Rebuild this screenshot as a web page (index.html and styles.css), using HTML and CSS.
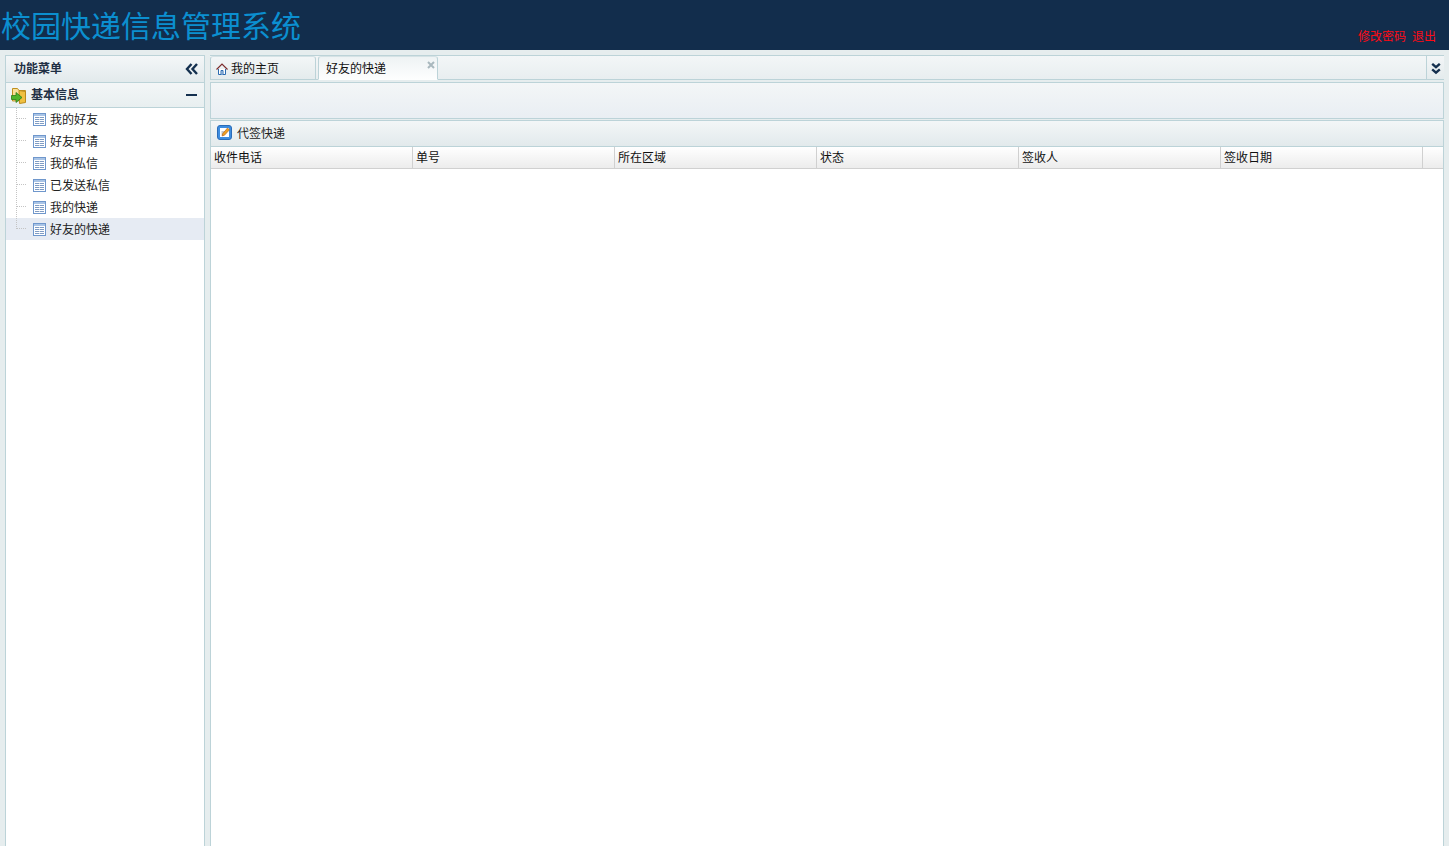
FILE: index.html
```html
<!DOCTYPE html>
<html lang="zh-CN">
<head>
<meta charset="utf-8">
<title>校园快递信息管理系统</title>
<link rel="stylesheet" href="styles.css">
</head>
<body>
<header class="top">
  <h1 class="brand">校园快递信息管理系统</h1>
  <div class="user-links"><a>修改密码</a><a>退出</a></div>
</header>
<div class="main">
  <aside class="west">
    <div class="west-title">
      <span>功能菜单</span>
      <svg class="ico-collapse" viewBox="0 0 14 12"><path d="M6.500 1 2 6l4.500 5M12 1 7.500 6l4.500 5" fill="none" stroke="#14304f" stroke-width="2.400"/></svg>
    </div>
    <div class="acc-head">
      <svg class="ico-folder" viewBox="0 0 16 17">
        <path d="M1.500 1.500h5l1.500 2h6.500v10l-13 .5z" fill="#f8e09a" stroke="#c08f1e"/>
        <path d="M8 3.500l6.500 1v11l-6 1z" fill="#f0c040" stroke="#b98a1c"/>
        <path d="M.5 8.500h4.500V5.500l6 5-6 5V12.500H.5z" fill="#4fb52c" stroke="#2c7c16" stroke-width=".8"/>
      </svg>
      <span class="acc-title">基本信息</span>
      <span class="acc-minus"></span>
    </div>
    <ul class="tree">
      <li class="node"><span class="guide"></span><svg class="ico-grid" viewBox="0 0 13 13"><use href="#g"/></svg><span>我的好友</span></li>
      <li class="node"><span class="guide"></span><svg class="ico-grid" viewBox="0 0 13 13"><use href="#g"/></svg><span>好友申请</span></li>
      <li class="node"><span class="guide"></span><svg class="ico-grid" viewBox="0 0 13 13"><use href="#g"/></svg><span>我的私信</span></li>
      <li class="node"><span class="guide"></span><svg class="ico-grid" viewBox="0 0 13 13"><use href="#g"/></svg><span>已发送私信</span></li>
      <li class="node"><span class="guide"></span><svg class="ico-grid" viewBox="0 0 13 13"><use href="#g"/></svg><span>我的快递</span></li>
      <li class="node selected"><span class="guide last"></span><svg class="ico-grid" viewBox="0 0 13 13"><use href="#g"/></svg><span>好友的快递</span></li>
    </ul>
  </aside>
  <section class="center">
    <div class="tabs">
      <div class="tab">
        <svg class="ico-home" viewBox="0 0 12 12"><path d="M2.500 6v5.500h7V6" fill="#fff" stroke="#2a6bb0"/><path d="M5 11.500V7.500h2v4" fill="#cfe0f2" stroke="#2a6bb0"/><path d="M.5 6.500 6 1l5.500 5.500" fill="none" stroke="#7c2d2d" stroke-width="1.200"/></svg>
        <span>我的主页</span>
      </div>
      <div class="tab active">
        <span>好友的快递</span>
        <svg class="tab-close" viewBox="0 0 8 8"><path d="M1 1l6 6M7 1 1 7" stroke="#a9b8be" stroke-width="2"/></svg>
      </div>
      <div class="tab-more">
        <svg viewBox="0 0 9 11"><path d="M1 .8l3.500 3L8 .8M1 5.800l3.500 3 3.500-3" fill="none" stroke="#14304f" stroke-width="2.200"/></svg>
      </div>
    </div>
    <div class="form-bar"></div>
    <div class="datagrid">
      <div class="toolbar">
        <svg class="ico-edit" viewBox="0 0 15 15">
          <rect x=".5" y=".5" width="14" height="14" rx="2.500" fill="#3d8de0" stroke="#2a6cb8"/>
          <rect x="3" y="3" width="9" height="9" fill="#fff"/>
          <path d="M4.500 7h3M4.500 9h2" stroke="#8a8a8a"/>
          <path d="M5 11l.8-2.500L10.500 3l2 1.800L7.500 10.200z" fill="#f0a020" stroke="#a85a18" stroke-width=".6"/>
        </svg>
        <span>代签快递</span>
      </div>
      <div class="grid-head">
        <div class="col">收件电话</div>
        <div class="col">单号</div>
        <div class="col">所在区域</div>
        <div class="col">状态</div>
        <div class="col">签收人</div>
        <div class="col">签收日期</div>
      </div>
      <div class="grid-body"></div>
    </div>
  </section>
</div>
<svg class="defs" width="0" height="0">
  <symbol id="g" viewBox="0 0 13 13">
    <rect x=".5" y=".5" width="12" height="12" fill="#fff" stroke="#6f97cc"/>
    <path d="M1 1h11v2H1z" fill="#a9c4e6"/>
    <path d="M2 4.500h9M2 6.500h9M2 8.500h9M2 10.500h9" stroke="#7f9cc4"/>
    <path d="M6.500 4v8" stroke="#fff" stroke-width=".6"/>
  </symbol>
</svg>
</body>
</html>
```

FILE: styles.css
```css
* { box-sizing: border-box; }
html, body { margin: 0; height: 100%; overflow: hidden; }
body {
  background: #e6edee;
  font: 12px/16px "Noto Sans CJK SC", "Liberation Sans", sans-serif;
  color: #111;
  display: flex;
  flex-direction: column;
}
.top {
  height: 50px;
  flex: none;
  background: #122d4c;
  display: flex;
  justify-content: space-between;
  padding: 0 13px 0 1px;
}
.brand {
  margin: -1px 0 0;
  font-size: 30px;
  line-height: 50px;
  font-weight: 400;
  color: #0b8fd0;
}
.user-links { color: #ff0a14; display: flex; gap: 6px; align-items: flex-end; padding-bottom: 6px; }
.main { flex: 1; min-height: 0; display: flex; gap: 5px; padding: 5px 5px 0; }
.west {
  width: 200px;
  flex: none;
  background: #fff;
  border: 1px solid #bcd3d8;
  border-bottom: 0;
}
.west-title {
  height: 27px;
  border-bottom: 1px solid #bcd3d8;
  background: linear-gradient(#f4f7f8, #e2eaec);
  display: flex;
  align-items: center;
  justify-content: space-between;
  padding: 0 6px 2px 8px;
  font-weight: 700;
  color: #1f2f44;
}
.ico-collapse { width: 14px; height: 12px; margin-top: 2px; margin-right: -1px; }
.acc-head {
  height: 25px;
  border-bottom: 1px solid #bcd3d8;
  background: linear-gradient(#f3f6f7, #e8eff0);
  display: flex;
  align-items: center;
  padding: 0 7px 2px 5px;
  font-weight: 700;
  color: #1f2f44;
}
.ico-folder { width: 16px; height: 17px; margin: 2px 4px 0 0; }
.acc-title { flex: 1; }
.acc-minus { width: 11px; height: 2px; background: #14304f; margin-top: 2px; }
.tree { list-style: none; margin: 0; padding: 0; }
.node {
  height: 22px;
  display: flex;
  align-items: center;
  color: #222;
}
.node.selected { background: #e6ebf3; }
.guide {
  align-self: stretch;
  width: 27px;
  flex: none;
  background:
    repeating-linear-gradient(#c4c4c4 0 1px, transparent 1px 2px) 10px 0 / 1px 100% no-repeat,
    repeating-linear-gradient(90deg, #c4c4c4 0 1px, transparent 1px 2px) 11px 10px / 10px 1px no-repeat;
}
.guide.last {
  background:
    repeating-linear-gradient(#c4c4c4 0 1px, transparent 1px 2px) 10px 0 / 1px 11px no-repeat,
    repeating-linear-gradient(90deg, #c4c4c4 0 1px, transparent 1px 2px) 11px 10px / 10px 1px no-repeat;
}
.ico-grid { width: 13px; height: 13px; margin-right: 4px; flex: none; }
.center { flex: 1; min-width: 0; display: flex; flex-direction: column; }
.tabs {
  height: 25px;
  flex: none;
  display: flex;
  gap: 2px;
  border-top: 1px solid #bcd3d8;
  border-bottom: 1px solid #bcd3d8;
  background: linear-gradient(#f3f6f7, #e8eef0);
  position: relative;
}
.tab {
  width: 106px;
  height: 24px;
  border: 1px solid #bcd3d8;
  border-top-color: #d5e2e5;
  border-radius: 3px 3px 0 0;
  background: linear-gradient(#f3f6f7, #e4ebed);
  display: flex;
  align-items: center;
  padding: 0 0 0 5px;
  gap: 3px;
  color: #111;
}
.tab.active {
  width: 120px;
  position: relative;
  padding-left: 7px;
  background: linear-gradient(#eef3f4, #fdfefe);
  border-bottom-color: #fdfefe;
}
.tab-close {
  position: absolute;
  top: 4px;
  right: 2px;
  width: 8px;
  height: 8px;
}
.ico-home { width: 12px; height: 12px; flex: none; margin-top: 1px; }
.tab-more {
  margin-left: auto;
  width: 18px;
  height: 23px;
  border-left: 1px solid #bcd3d8;
  background: linear-gradient(#f3f6f7, #e4ebed);
  display: flex;
  align-items: center;
  justify-content: center;
}
.tab-more svg { width: 10px; height: 12px; margin-top: 2px; }
.form-bar {
  height: 37px;
  flex: none;
  margin-top: 2px;
  border: 1px solid #bcd3d8;
  background: linear-gradient(#f3f6f7, #e9eef3);
}
.datagrid {
  flex: 1;
  min-height: 0;
  display: flex;
  flex-direction: column;
  margin-top: 1px;
  border: 1px solid #bcd3d8;
  border-bottom: 0;
  background: #fff;
}
.toolbar {
  height: 26px;
  flex: none;
  border-bottom: 1px solid #bcd3d8;
  background: linear-gradient(#f3f6f7, #e2eaec);
  display: flex;
  align-items: center;
  padding: 0 0 2px 6px;
  gap: 5px;
  color: #222;
}
.ico-edit { width: 15px; height: 15px; }
.grid-head {
  height: 22px;
  flex: none;
  display: flex;
  border-bottom: 1px solid #d0d0d0;
  background: linear-gradient(#fff, #ececec);
  color: #111;
}
.col {
  width: 202px;
  padding-left: 3px;
  border-right: 1px solid #d0d0d0;
  line-height: 19px;
}
.grid-body { flex: 1; background: #fff; }
.defs { position: absolute; }
```
